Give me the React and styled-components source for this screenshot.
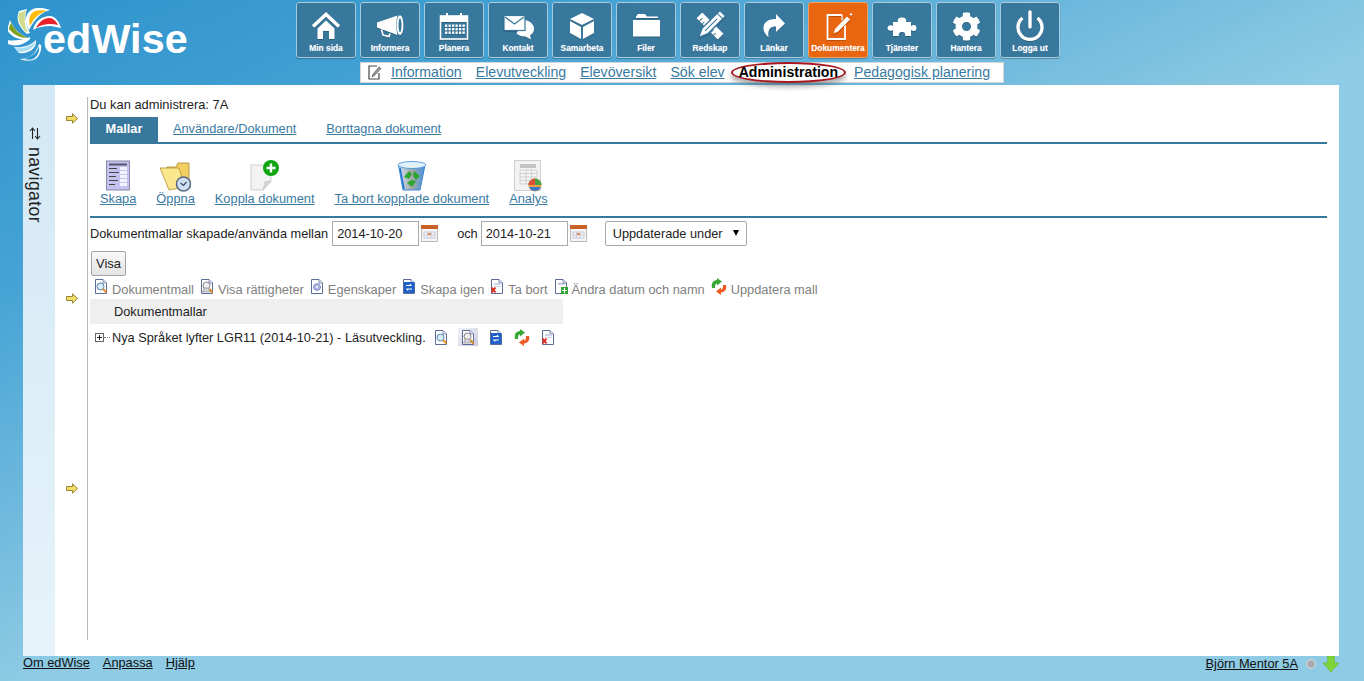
import React from 'react';
import styled, { createGlobalStyle } from 'styled-components';
import { FaCog } from 'react-icons/fa';

const Global = createGlobalStyle`
  html, body { margin: 0; padding: 0; height: 100%; }
  body { font-family: "Liberation Sans", Arial, sans-serif; font-size: 12.75px; color: #222; overflow: hidden; }
`;

const Page = styled.div`
  width: 1364px; height: 681px; display: flex; flex-direction: column;
  background: linear-gradient(155deg, #2e93cc 0%, #46a3d5 22%, #8fcbe4 53%);
`;
const Header = styled.header`display: flex; height: 85px; flex: none;`;
const LogoArea = styled.div`width: 296px; flex: none; display: flex; align-items: flex-start; padding: 8px 0 0 8px; box-sizing: border-box;`;
const LogoText = styled.span`
  font-size: 41.3px; font-weight: 700; color: #fff; line-height: 46px; margin: 8px 0 0 -21px; letter-spacing: 0.1px;
`;
const NavColumn = styled.div`width: 764px; display: flex; flex-direction: column; align-items: center; padding-top: 2px;`;
const NavRow = styled.nav`display: flex; gap: 4px;`;
const NavButton = styled.a`
  width: 60px; height: 56px; box-sizing: border-box; border-radius: 3px;
  border: 1px solid ${p => (p.$active ? '#f0a060' : '#a9cbdd')};
  background: ${p => (p.$active ? '#e9650f' : '#39789d')};
  display: flex; flex-direction: column; align-items: center; padding-top: 7px;
  box-shadow: 0 1px 1px rgba(0,0,0,.25);
`;
const NavIcon = styled.div`width: 36px; height: 32px; display: flex; align-items: center; justify-content: center; color: #fff;
  svg { display: block; filter: drop-shadow(0 1px 0 rgba(0,0,0,.2)); }`;
const NavLabel = styled.span`
  font-size: 8.4px; font-weight: 700; color: #fff; margin-top: 0; line-height: 12px; white-space: nowrap;
  text-shadow: 0 0 1px rgba(255,255,255,.4);
`;
const SubNav = styled.div`
  margin: 4px 0 0 8px; width: 644px; height: 21px; box-sizing: border-box; background: #fff; border: 1px solid #d6d6d6;
  display: flex; align-items: center; gap: 14px; padding: 0 0 1px 7px; font-size: 14.15px; flex: none;
`;
const SubIcon = styled.svg`margin-right: -5px; flex: none;`;
const SubLink = styled.a`color: #3a7a9f; text-decoration: underline; white-space: nowrap;`;
const AdminLink = styled.a`
  position: relative; z-index: 1; color: #000; font-weight: 700; white-space: nowrap; font-size: 14.1px;
  margin: 1px -6px 0 -8px; padding: 0 6px; height: 17px; line-height: 17px; background: #fff;
  border: 2px solid #a8161f; border-radius: 50%; box-shadow: 0 4px 5px rgba(70,70,70,.45);
`;

const Main = styled.main`flex: 1; margin: 0 25px 0 23px; display: flex; background: #fff; min-height: 0;`;
const Sidebar = styled.aside`
  width: 32px; flex: none; background: linear-gradient(180deg, #d3e8f5, #e6f3fa);
  display: flex; flex-direction: column; align-items: center; padding: 42px 8px 0 0; box-sizing: border-box;
`;
const NavigatorText = styled.span`
  writing-mode: vertical-rl; font-size: 17.6px; color: #222; margin-top: 7px; line-height: 20px; letter-spacing: .4px;
`;
const Splitter = styled.div`width: 34px; flex: none; display: flex; flex-direction: column; align-items: center;`;
const SplitArrow = styled.svg`margin-top: ${p => p.$top}px; display: block; flex: none;`;
const ContentWrap = styled.div`flex: 1; padding: 12px 12px 16px 0; display: flex; min-width: 0; margin-left: -2px;`;
const Content = styled.div`flex: 1; border-left: 1px solid #b9b9b9; padding-left: 2px; min-width: 0;`;
const Title = styled.div`height: 20px; line-height: 16px; font-size: 12.9px;`;
const Tabs = styled.div`display: flex; height: 25px; border-bottom: 2px solid #39789d; gap: 30px;`;
const Tab = styled.a`
  line-height: 24px; white-space: nowrap;
  ${p => p.$active
    ? 'background:#39789d;color:#fff;font-weight:700;width:68px;text-align:center;margin-right:-15px;'
    : 'color:#3a7a9f;text-decoration:underline;'}
`;
const Toolbar = styled.div`display: flex; gap: 20px; padding: 16px 0 0 10px; height: 56px; border-bottom: 2px solid #39789d; box-sizing: content-box; font-size: 12.82px;`;
const ToolItem = styled.a`display: flex; flex-direction: column; align-items: center; color: #3a7a9f; text-decoration: underline; white-space: nowrap; line-height: 15px;
  svg { display: block; height: 32px; margin-bottom: -1px; }`;
const FilterRow = styled.div`display: flex; align-items: center; height: 25px; margin-top: 3px;`;
const FilterText = styled.span`white-space: nowrap; margin-left: ${p => p.$ml || 0}px; margin-right: ${p => p.$mr ?? 4}px;`;
const DateInput = styled.input`
  width: 87px; height: 25px; box-sizing: border-box; border: 1px solid #a9a9a9; padding: 0 4px; margin: 0;
  font: 12.75px "Liberation Sans", Arial, sans-serif; color: #222; background: #fff; outline: none;
`;
const CalIcon = styled.svg`margin-left: ${p => p.$ml}px; flex: none;`;
const SelectWrap = styled.div`
  position: relative; width: 142px; height: 25px; margin-left: 18px; flex: none;
  &::after { content: ''; position: absolute; right: 8px; top: 9px; border-left: 3.5px solid transparent; border-right: 3.5px solid transparent; border-top: 6px solid #000; }
`;
const Select = styled.select`
  appearance: none; width: 100%; height: 100%; border: 1px solid #a9a9a9; border-radius: 2px; background: #fff; padding: 0 0 0 7px;
  font: 12.75px "Liberation Sans", Arial, sans-serif; color: #222;
`;
const VisaButton = styled.button`
  display: block; margin: 5px 0 0 1px; width: 35px; height: 25px; padding: 0; border: 1px solid #a3a3a3; border-radius: 2px;
  background: linear-gradient(#f8f8f8, #e4e4e4); font: 13px "Liberation Sans", Arial, sans-serif; color: #222;
`;
const Legend = styled.div`display: flex; height: 20px; align-items: center; margin: 3px 0 0 4px; gap: 6px; color: #808080; font-size: 12.82px;`;
const LegendItem = styled.span`display: flex; align-items: center; gap: 4px; white-space: nowrap;
  svg { margin-top: -5px; }`;
const TreeHeader = styled.div`width: 473px; height: 25px; background: #efefef; line-height: 25px; padding-left: 24px; box-sizing: border-box; margin-top: 0;`;
const TreeRow = styled.div`display: flex; align-items: center; height: 20px; margin-top: 3px; padding-left: 5px;`;
const Expander = styled.span`
  width: 7px; height: 7px; border: 1px solid #666; position: relative; flex: none; background: #fff;
  &::before { content: ''; position: absolute; left: 1px; right: 1px; top: 3px; height: 1px; background: #222; }
  &::after { content: ''; position: absolute; top: 1px; bottom: 1px; left: 3px; width: 1px; background: #222; }
`;
const TreeDots = styled.span`width: 6px; border-top: 1px dotted #777; margin: 0 2px 0 0; flex: none;`;
const TreeLabel = styled.span`white-space: nowrap; margin-right: 8px;`;
const RowIcon = styled.span`
  display: flex; align-items: center; justify-content: center; flex: none; height: 18px; width: ${p => p.$w}px; margin-right: ${p => p.$mr}px;
  ${p => p.$hi ? 'background: linear-gradient(135deg,#f4f4fb,#c9cce0);' : ''}
`;
const Footer = styled.footer`height: 25px; flex: none; display: flex; align-items: flex-start; padding: 0 25px 0 23px; line-height: 14px; font-size: 12.8px;`;
const FootLeft = styled.div`display: flex; gap: 13px;`;
const FootLink = styled.a`color: #111; text-decoration: underline; white-space: nowrap;`;
const FootRight = styled.div`margin-left: auto; display: flex; align-items: center; gap: 8px;`;

/* ---- nav icons ---- */
const I = ({ children, w = 36, h = 32 }) => <svg width={w} height={h} viewBox={`0 0 ${w} ${h}`} fill="#fff">{children}</svg>;
const HomeI = () => <I>
  <path d="M5 16.5 18 4.5l13 12" fill="none" stroke="#fff" strokeWidth="3.6" />
  <path d="M9.5 18.5 18 10.5l8.5 8V29H21v-8h-6v8H9.5z" />
</I>;
const MegaI = () => <I>
  <path d="M5 12.5 25.5 5.5Q23 15 25.5 25L5 17.5z" />
  <ellipse cx="28" cy="15.2" rx="3.4" ry="10" />
  <ellipse cx="28" cy="15.2" rx="1.5" ry="7" fill="#39789d" />
  <path d="M9.5 19.5l1.5 5.5 6 1.5 1-3" fill="none" stroke="#fff" strokeWidth="1.6" />
</I>;
const CalI = () => <I>
  <rect x="4.5" y="6" width="27" height="23" fill="none" stroke="#fff" strokeWidth="1.6" />
  <rect x="4.5" y="6" width="27" height="6" />
  <rect x="10" y="3" width="2" height="7" /><rect x="24" y="3" width="2" height="7" />
  <g>{[14.5, 18, 21.5].map(y => [9, 12.5, 16, 19.5, 23, 26.5].map(x => <rect key={`${x}-${y}`} x={x} y={y} width="2.3" height="2.4" />))}</g>
</I>;
const MailI = () => <I>
  <path d="M24 10a10.5 9 0 0 1 10 9c0 3-1.5 5-4 6.5l1 4-5.5-3a11 9 0 0 1-9-3z" />
  <rect x="4" y="5.5" width="21" height="15" stroke="#39789d" strokeWidth="1.2" />
  <path d="M5 7l9.5 7L24 7" fill="none" stroke="#39789d" strokeWidth="1.3" />
</I>;
const CubeI = () => <I>
  <path d="M18 3l12 6-12 6-12-6z" /><path d="M6 11l11 6v12L6 23z" /><path d="M30 11l-11 6v12l11-6z" />
</I>;
const FolderI = () => <I>
  <path d="M8 6.5 10 4h7l2 2.5h11v1.5H8z" />
  <path d="M5 10h27v16.5H5z" />
</I>;
const ToolsI = () => <I>
  <g transform="rotate(-45 18 16)">
    <rect x="14" y="1" width="8" height="30" />
    <path d="M14 5h4M14 9h3M14 13h4M14 17h3M14 21h4M14 25h3" stroke="#39789d" strokeWidth="1" />
  </g>
  <g transform="rotate(45 18 16)">
    <path d="M14 -2h8v25l-4 9-4-9z" stroke="#39789d" strokeWidth="1.4" />
    <path d="M14 2h8M18 6v17" stroke="#39789d" strokeWidth="1" />
  </g>
</I>;
const ShareI = () => <I>
  <path d="M20 4l9 9.5-9 8.500v-5.500c-6 0-8.500 3-7.500 11-4.500-4.500-6-8-4.500-12.500 1.500-4 6-6 12-6z" />
</I>;
const DocI = () => <I>
  <path d="M22 5H7.500v24h17.500V13" fill="none" stroke="#fff" strokeWidth="1.8" />
  <path d="M22 5v5h3" fill="none" stroke="#fff" strokeWidth="1.2" />
  <path d="M13 24l1.500-5L27 6l3.500 3.500L18 22z" stroke="#e9650f" strokeWidth="1" />
  <path d="M31 2.500l.6 1.300 1.300.6-1.300.6-.6 1.300-.6-1.300-1.300-.6 1.300-.6z" />
</I>;
const PuzzleI = () => <I>
  <path d="M9 12h5c-1-3 1-4.500 4-4.500s5 1.500 4 4.500h5v4c3-2 5.500-1 5.500 2s-2.500 4-5.500 2v6h-6c1-3-1-4-3-4s-4 1-3 4H9v-6c-3 2-5.500 0-5.500-2s2.500-4 5.500-2z" />
</I>;
const PowerI = () => <I>
  <path d="M10.500 6.500a12 12 0 1 0 15 0" fill="none" stroke="#fff" strokeWidth="3.400" transform="translate(0 1.500)" />
  <path d="M18 2v15" stroke="#fff" strokeWidth="3.400" strokeLinecap="round" />
</I>;

const navItems = [
  ['Min sida', <HomeI />], ['Informera', <MegaI />], ['Planera', <CalI />], ['Kontakt', <MailI />],
  ['Samarbeta', <CubeI />], ['Filer', <FolderI />], ['Redskap', <ToolsI />], ['Länkar', <ShareI />],
  ['Dokumentera', <DocI />, true], ['Tjänster', <PuzzleI />], ['Hantera', <FaCog size={29} />], ['Logga ut', <PowerI />],
];

/* ---- logo ---- */
const Logo = () => (
  <svg width="56" height="56" viewBox="8 8 56 56" style={{ flex: 'none', display: 'block' }}>
    <path d="M29 30C24 21 25 13 33 9c6-2 11-1 17 1-8 2-15 8-21 20z" fill="#fff" />
    <path d="M30 26C28 19 30 13 35 11c4-1 8-1 12 0-8 2-13 7-17 15z" fill="#fdbb0b" />
    <path d="M33 30C35 21 42 16 50 16c5 0 9 5 11 12l-10-2c-7 0-13 1-18 4z" fill="#fff" />
    <path d="M36 28c3-6 8-10 13-10 4 0 7 3 9 7-8-2-16-1-22 3z" fill="#e8202a" />
    <path d="M27 34C20 28 15 20 19 11l8-2c-3 8-1 16 3 24z" fill="#fff" />
    <path d="M26 32c-6-6-9-13-7-19 2-.8 3.500-1.500 7-2.500-2 7-2 15 2 21z" fill="#cfdc8e" />
    <path d="M27 39c-7 1-15-1-20-9l3-10c3 8 9 14 18 18z" fill="#fff" />
    <path d="M28 38c-8 0-14-3-19-9 0-2 1-4 2-6 3 6 9 12 17 15z" fill="#7ea11e" />
    <path d="M30 39c-6 6-15 8-22 5-1-1-1-3-1-4 7 1 16 0 23-3z" fill="#fff" />
    <path d="M36 42c0 7-8 12-17 11l-5-6c8 1 16-1 22-7z" fill="#fff" />
    <path d="M35 43c-1 5-8 9-16 9l-4-4c8 1 15-2 20-6z" fill="#a8dcf0" />
    <path d="M41 45c1 7-3 14-8 15-4 1-9 1-13-1 9 0 16-5 19-15z" fill="#fff" />
    <path d="M39 46c1 6-2 11-6 13-3 1-6 1-9 0 7-2 13-6 15-13z" fill="#2a95cf" />
  </svg>
);

/* ---- coloured icons ---- */
const SkapaIcon = () => <svg width="24" height="32" viewBox="0 0 24 32"><rect x=".5" y="1" width="23" height="29" fill="#c4c2ee" stroke="#8a88a8" />
  <rect x="3" y="3.500" width="18" height="2" fill="#55556a" />
  {[8, 12, 16, 20, 24].map((y, i) => <g key={y}><rect x="3" y={y} width={[8, 10, 7, 9, 6][i]} height="1" fill="#444" /><rect x="14" y={y - 1} width="7" height="3" fill="#f4f4ff" /></g>)}
</svg>;
const OppnaIcon = () => <svg width="31" height="32" viewBox="0 0 31 32">
  <path d="M7 7h9l2-4h11v20H7z" fill="#f3cf62" stroke="#a58a34" strokeWidth=".8" />
  <path d="M0 8h19l6 19-16 3z" fill="#fbe88e" stroke="#ac8f35" strokeWidth=".8" />
  <circle cx="23.500" cy="24" r="7" fill="#cfe1f5" stroke="#5c6a82" strokeWidth="1.600" />
  <path d="M20.500 23l3 2.500 3-3.500" fill="none" stroke="#3a4a66" strokeWidth="1.200" />
</svg>;
const KopplaIcon = () => <svg width="30" height="32" viewBox="0 0 30 32">
  <path d="M1 5h20v16l-8 9H1z" fill="#f3f3f3" stroke="#cfcfcf" />
  <path d="M13 30l2-8 6-1z" fill="#d8d8d8" stroke="#bbb" strokeWidth=".6" />
  <circle cx="21" cy="8" r="8" fill="#0fa50f" />
  <path d="M21 3.500v9M16.500 8h9" stroke="#fff" strokeWidth="2.400" />
</svg>;
const TrashIcon = () => <svg width="30" height="32" viewBox="0 0 30 32">
  <defs><linearGradient id="tr" x1="0" x2="1"><stop offset="0" stopColor="#cfe4f5" /><stop offset=".5" stopColor="#a4a8a8" /><stop offset="1" stopColor="#4a95de" /></linearGradient></defs>
  <path d="M1.500 5 6 30h17l5-25z" fill="url(#tr)" stroke="#2d7bd0" strokeWidth=".9" />
  <ellipse cx="15" cy="5" rx="14" ry="3.500" fill="#e3f1fb" stroke="#3a8bd8" strokeWidth=".8" />
  <path d="M7 17l5-6 3 3-3 5zM17 11l6 5-4 4-3-4zM10 23l5 4 4-6-5-1z" fill="#2fa52f" />
  <path d="M3 8 7 29" stroke="#1d6fd0" strokeWidth="1.400" />
</svg>;
const AnalysIcon = () => <svg width="28" height="32" viewBox="0 0 28 32">
  <rect x=".5" y=".5" width="26" height="30" fill="#f3f3f3" stroke="#cfcfcf" />
  <rect x="6" y="4" width="16" height="4" fill="#c4c4c4" />
  <path d="M6 10h17v14H6zM6 13.500h17M6 17h17M6 20.500h17M12 10v14M17.500 10v14" fill="none" stroke="#c9c9c9" strokeWidth=".8" />
  <circle cx="21" cy="25" r="6.500" fill="#f0a040" />
  <path d="M14.500 25a6.500 6.500 0 0 1 13 0z" fill="#4aa04a" /><path d="M14.500 25a6.500 6.500 0 0 1 6.500-6.500V25z" fill="#e0503a" />
  <path d="M15 27h12a6.500 6.500 0 0 1-12 0z" fill="#3a78c8" />
</svg>;
const Cal = ({ ml }) => <CalIcon $ml={ml} width="17" height="17" viewBox="0 0 17 17">
  <rect x=".5" y=".5" width="16" height="16" fill="#f4f4f4" stroke="#bbb" />
  <rect x="0" y="0" width="17" height="4" fill="#c8622a" />
  <path d="M3 7h11v6H3zM6.500 7v6M10 7v6M3 10h11" fill="none" stroke="#c9c9d9" />
  <rect x="7" y="8" width="3" height="2" fill="#e08a50" />
</CalIcon>;

const Doc = ({ children, w = 14, h = 15 }) => <svg width={w} height={h} viewBox="0 0 14 15" style={{ flex: 'none', display: 'block' }}>
  <path d="M1.500 .5H9l3.500 3.500v10.500h-11z" fill="#fff" stroke="#5d6c98" />
  <path d="M9 .5V4h3.500" fill="#dfe4f4" stroke="#5d6c98" strokeWidth=".7" />
  {children}
</svg>;
const Mag = () => <Doc><circle cx="6.500" cy="7.500" r="3.500" fill="#d7ecf8" stroke="#5b83a8" /><path d="M9 10l3.500 3.500" stroke="#e58d2d" strokeWidth="2" /></Doc>;
const Priv = () => <Doc><circle cx="6.500" cy="6.500" r="3.500" fill="#eeeef4" stroke="#777" strokeWidth=".9" /><path d="M2.500 13l2-4h4l2 4z" fill="#d4d4de" stroke="#777" strokeWidth=".6" /><path d="M9.500 10l3 3.500" stroke="#d9902a" strokeWidth="2" /></Doc>;
const Gear = () => <Doc><circle cx="7" cy="8" r="3.500" fill="#aab0e0" stroke="#6d72b5" strokeDasharray="1.500 .8" /><circle cx="7" cy="8" r="1" fill="#fff" /></Doc>;
const Again = () => <Doc><rect x="1.800" y="3" width="10.500" height="11" fill="#1f5fc8" /><path d="M4 6.500h5l-1-1.500M10 10H5l1 1.500" stroke="#fff" strokeWidth="1.200" fill="none" /></Doc>;
const Del = () => <Doc><rect x="4" y="4" width="7" height="2" fill="#cfd6e8" /><rect x="4" y="7" width="7" height="1" fill="#cfd6e8" /><path d="M1.500 8.500l4 5M5.500 8.500l-4 5" stroke="#dd2a1a" strokeWidth="2" /></Doc>;
const Plus = () => <Doc><rect x="4" y="4" width="7" height="1.500" fill="#aab4cc" /><rect x="7" y="8" width="7" height="7" fill="#2fa52f" /><path d="M10.500 9v5M8 11.500h5" stroke="#fff" strokeWidth="1.200" /></Doc>;
const Update = () => <svg width="16" height="17" viewBox="0 0 16 17" style={{ flex: 'none', display: 'block' }}>
  <path d="M1 10C0 5 2 2.500 6 2V0l5 3.500L6 7.500V5.500C4.500 5.500 4 7 4 10z" fill="#39a832" />
  <path d="M15 7c1 4.500-1 7-5 7.500V17l-5-3.500 5-4v2c1.500 0 2-1.500 2-4.500z" fill="#ee5a24" />
</svg>;

const Arrow = ({ top }) => <SplitArrow $top={top} width="12" height="11" viewBox="0 0 12 11">
  <path d="M.5 3.500h6V.8l5 4.700-5 4.700V7.500h-6z" fill="#f2dc66" stroke="#8a7a28" strokeWidth=".9" />
</SplitArrow>;

const legend = [['Dokumentmall', <Mag />], ['Visa rättigheter', <Priv />], ['Egenskaper', <Gear />], ['Skapa igen', <Again />], ['Ta bort', <Del />], ['Ändra datum och namn', <Plus />], ['Uppdatera mall', <Update />]];

export default function App() {
  return (
    <Page>
      <Global />
      <Header>
        <LogoArea><Logo /><LogoText>edWise</LogoText></LogoArea>
        <NavColumn>
          <NavRow>
            {navItems.map(([label, icon, active]) => (
              <NavButton key={label} $active={active}><NavIcon>{icon}</NavIcon><NavLabel>{label}</NavLabel></NavButton>
            ))}
          </NavRow>
          <SubNav>
            <SubIcon width="14" height="15" viewBox="0 0 14 15">
              <path d="M9 1H1v13h10V8" fill="none" stroke="#444" strokeWidth="1.200" />
              <path d="M4 12l1-3 6-7 2 1.500-6.500 7z" fill="#999" stroke="#444" strokeWidth=".6" />
            </SubIcon>
            <SubLink>Information</SubLink>
            <SubLink>Elevutveckling</SubLink>
            <SubLink>Elevöversikt</SubLink>
            <SubLink>Sök elev</SubLink>
            <AdminLink>Administration</AdminLink>
            <SubLink>Pedagogisk planering</SubLink>
          </SubNav>
        </NavColumn>
      </Header>
      <Main>
        <Sidebar>
          <svg width="12" height="13" viewBox="0 0 12 13" fill="none" stroke="#222" strokeWidth="1.100">
            <path d="M3.500 12V1.500M1 4l2.500-3L6 4" /><path d="M8.500 1v10.500M6 9l2.500 3L11 9" />
          </svg>
          <NavigatorText>navigator</NavigatorText>
        </Sidebar>
        <Splitter>
          <Arrow top={28} />
          <Arrow top={169} />
          <Arrow top={179} />
        </Splitter>
        <ContentWrap>
          <Content>
            <Title>Du kan administrera: 7A</Title>
            <Tabs>
              <Tab $active>Mallar</Tab>
              <Tab>Användare/Dokument</Tab>
              <Tab>Borttagna dokument</Tab>
            </Tabs>
            <Toolbar>
              <ToolItem><SkapaIcon />Skapa</ToolItem>
              <ToolItem><OppnaIcon />Öppna</ToolItem>
              <ToolItem><KopplaIcon />Koppla dokument</ToolItem>
              <ToolItem><TrashIcon />Ta bort kopplade dokument</ToolItem>
              <ToolItem><AnalysIcon />Analys</ToolItem>
            </Toolbar>
            <FilterRow>
              <FilterText>Dokumentmallar skapade/använda mellan</FilterText>
              <DateInput defaultValue="2014-10-20" />
              <Cal ml={2} />
              <FilterText $ml={19} $mr={3}>och</FilterText>
              <DateInput defaultValue="2014-10-21" />
              <Cal ml={2} />
              <SelectWrap><Select defaultValue="u"><option value="u">Uppdaterade under</option></Select></SelectWrap>
            </FilterRow>
            <VisaButton>Visa</VisaButton>
            <Legend>
              {legend.map(([t, ic]) => <LegendItem key={t}>{ic}{t}</LegendItem>)}
            </Legend>
            <TreeHeader>Dokumentmallar</TreeHeader>
            <TreeRow>
              <Expander /><TreeDots />
              <TreeLabel>Nya Språket lyfter LGR11 (2014-10-21) - Läsutveckling.</TreeLabel>
              <RowIcon $w={14} $mr={10}><Mag /></RowIcon>
              <RowIcon $w={20} $hi $mr={11}><Priv /></RowIcon>
              <RowIcon $w={14} $mr={11}><Again /></RowIcon>
              <RowIcon $w={16} $mr={11}><Update /></RowIcon>
              <RowIcon $w={14} $mr={0}><Del /></RowIcon>
            </TreeRow>
          </Content>
        </ContentWrap>
      </Main>
      <Footer>
        <FootLeft><FootLink>Om edWise</FootLink><FootLink>Anpassa</FootLink><FootLink>Hjälp</FootLink></FootLeft>
        <FootRight>
          <FootLink>Björn Mentor 5A</FootLink>
          <svg width="10" height="10" viewBox="0 0 10 10"><circle cx="5" cy="5" r="4.300" fill="#a9a9b0" stroke="#ddd" /></svg>
          <svg width="16" height="16" viewBox="0 0 16 16" style={{ marginLeft: -1 }}><path d="M4.500 0h7v7H16l-8 9-8-9h4.500z" fill="#7ed33a" stroke="#5fb02a" strokeWidth=".5" /></svg>
        </FootRight>
      </Footer>
    </Page>
  );
}
